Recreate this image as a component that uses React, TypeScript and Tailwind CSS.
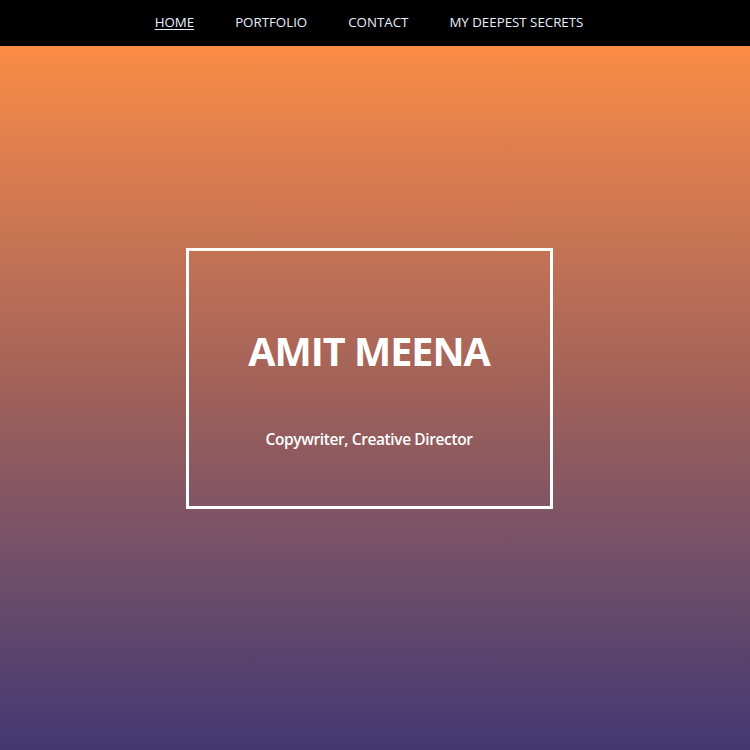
const links = ["HOME", "PORTFOLIO", "CONTACT", "MY DEEPEST SECRETS"];

export default function App() {
  return (
    <div
      className="min-h-[750px] flex flex-col"
      style={{ fontFamily: '"Open Sans", "Noto Sans", sans-serif' }}
    >
      <nav className="h-[46px] bg-black flex items-center justify-center pr-3 pb-1">
        <ul className="flex gap-[41px]">
          {links.map((l, i) => (
            <li key={l}>
              <a
                href="#"
                className={`text-[13.3px] text-[#e8f0ff] ${i === 0 ? "underline underline-offset-2" : ""}`}
              >
                {l}
              </a>
            </li>
          ))}
        </ul>
      </nav>
      <main className="flex-1 flex justify-center pt-[202px] pr-3 bg-gradient-to-b from-[#fb8c44] via-[#9e6059] to-[#433772]">
        <div className="w-[367px] h-[261px] border-[3px] border-white flex flex-col items-center text-white">
          <h1 className="mt-[81px] text-[39.5px] font-bold tracking-tight leading-none">AMIT MEENA</h1>
          <p className="mt-[56px] text-[15.5px] font-semibold tracking-tight">Copywriter, Creative Director</p>
        </div>
      </main>
    </div>
  );
}
